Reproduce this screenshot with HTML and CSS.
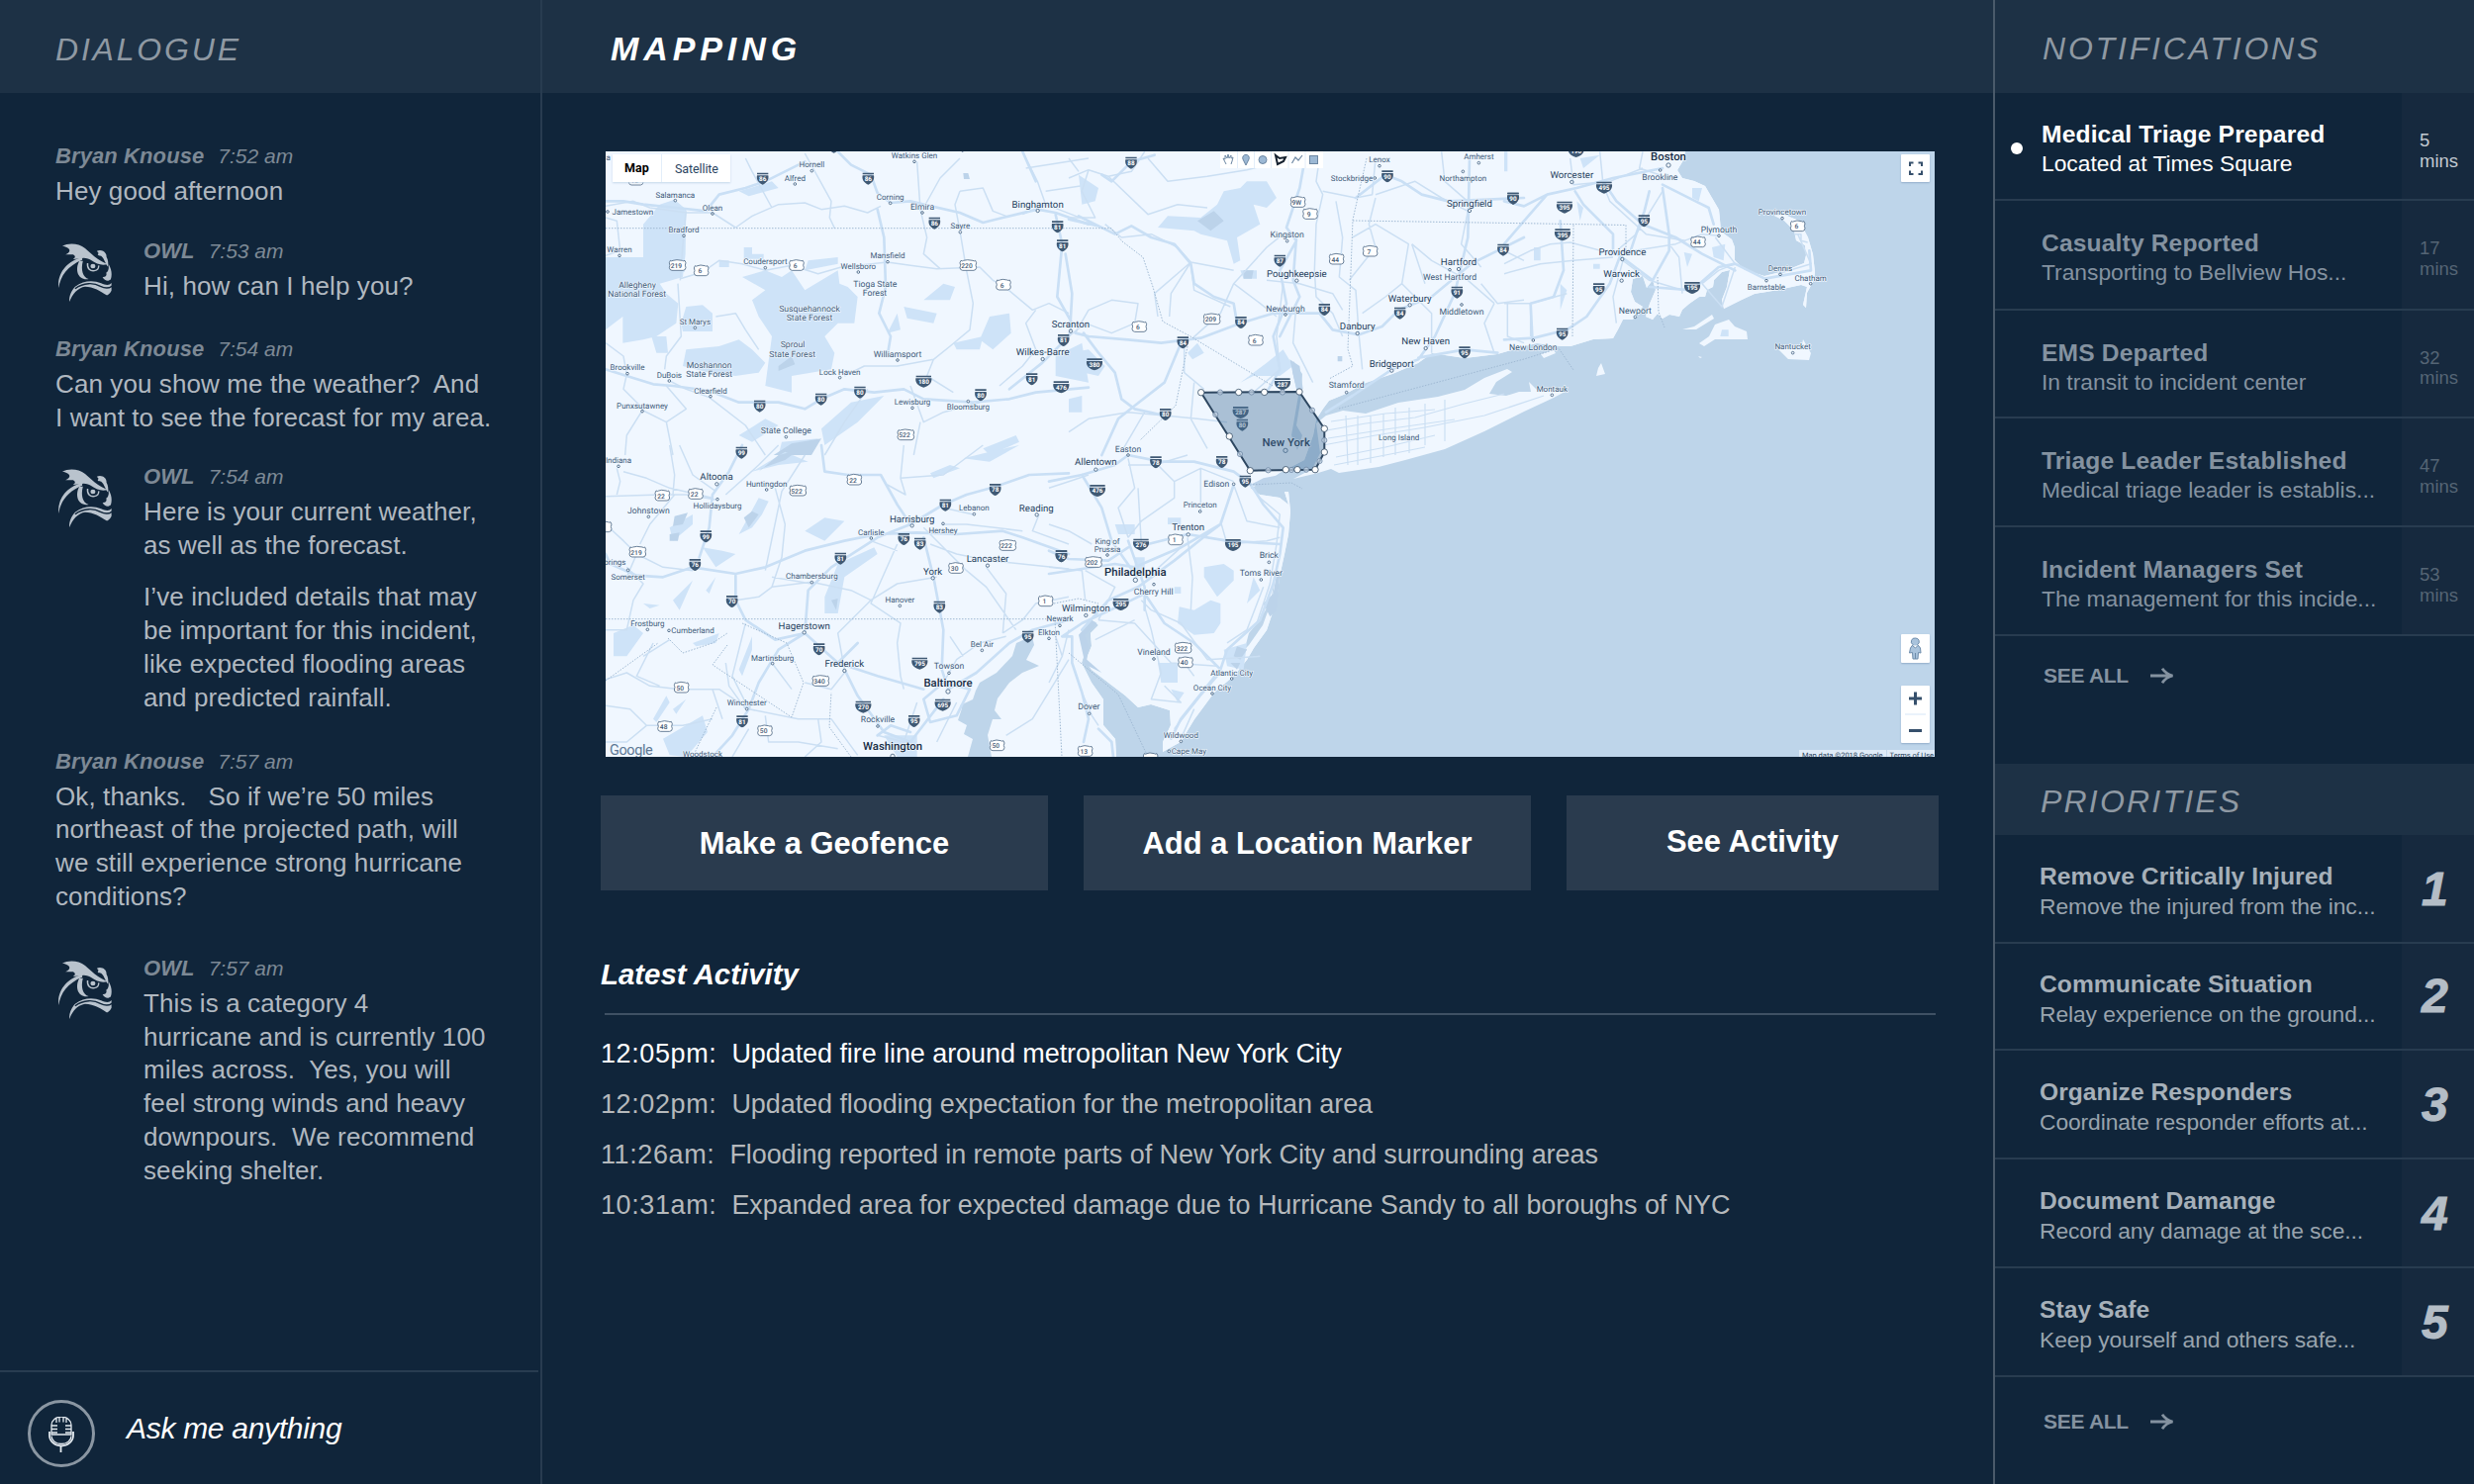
FILE: index.html
```html
<!DOCTYPE html>
<html lang="en">
<head>
<meta charset="utf-8">
<title>OWL – Mapping</title>
<link rel="stylesheet" href="styles.css">
</head>
<body>
<svg class="defs" aria-hidden="true">
  <symbol id="owl" viewBox="165 735 150 177" preserveAspectRatio="none">
    <path d="M176 743C195 733 222 735 240 750L266 775C279 786 290 793 303 798C288 803 272 798 258 787C250 781 238 777 226 781L206 783C214 778 213 773 206 769L185 769C196 763 198 758 195 752C190 746 183 744 176 743Z"/>
    <path d="M232 778C192 786 160 826 166 870C170 834 192 802 232 785Z"/>
    <path d="M273 758C287 752 301 762 300 776C305 784 305 796 305 806C297 800 295 781 285 773C278 773 272 770 278 765Z"/>
    <path d="M224 788C210 815 220 848 250 843C234 838 227 815 234 788Z"/>
    <path d="M306 798C315 815 316 830 312 844C305 852 295 849 289 837C298 838 302 832 299 824C306 820 307 810 306 798Z"/>
    <path d="M247 795C245 812 255 820 266 818C274 816 279 810 278 802" fill="none" stroke="currentColor" stroke-width="4"/>
    <circle cx="262" cy="804" r="7"/>
    <path d="M212 866C235 848 262 846 285 856C298 862 308 863 314 855L314 878C309 888 304 892 300 892C285 880 262 866 240 866C220 869 204 888 196 912C194 895 202 877 212 866Z"/>
    <path d="M212 872C236 853 265 854 283 865C296 872 306 873 316 864" fill="none" stroke="#10253a" stroke-width="4"/>
  </symbol>
  <symbol id="arrow" viewBox="0 0 24 16"><path d="M0 8H22M12 .8C14.500 4.500 18 7 22.500 8C18 9 14.500 11.500 12 15.200" fill="none" stroke="currentColor" stroke-width="2.800"/></symbol>
  <symbol id="interstate" viewBox="-20 -20 40 40" overflow="visible"><path d="M-17-17H17V-12H-17ZM-17-9H17C20 4 12 14 0 19C-12 14-20 4-17-9Z"/></symbol>
  <symbol id="interstate-wide" viewBox="-26 -20 52 40" overflow="visible"><path d="M-23-17H23V-12H-23ZM-24-9H24C26 6 16 14 0 19C-16 14-26 6-24-9Z"/></symbol>
</svg>

<div class="app">
  <aside class="dialogue">
    <header class="bar"><h2 class="bar-title">DIALOGUE</h2></header>
    <div class="chat">
      <article class="msg">
        <div class="meta"><b>Bryan Knouse</b><time>7:52 am</time></div>
        <p>Hey good afternoon</p>
      </article>
      <article class="msg bot">
        <svg class="owl"><use href="#owl"/></svg>
        <div>
          <div class="meta"><b>OWL</b><time>7:53 am</time></div>
          <p>Hi, how can I help you?</p>
        </div>
      </article>
      <article class="msg">
        <div class="meta"><b>Bryan Knouse</b><time>7:54 am</time></div>
        <p>Can you show me the weather?&nbsp; And<br>I want to see the forecast for my area.</p>
      </article>
      <article class="msg bot">
        <svg class="owl"><use href="#owl"/></svg>
        <div>
          <div class="meta"><b>OWL</b><time>7:54 am</time></div>
          <p>Here is your current weather,<br>as well as the forecast.</p>
          <p>I’ve included details that may<br>be important for this incident,<br>like expected flooding areas<br>and predicted rainfall.</p>
        </div>
      </article>
      <article class="msg spaced">
        <div class="meta"><b>Bryan Knouse</b><time>7:57 am</time></div>
        <p>Ok, thanks.&nbsp;&nbsp; So if we’re 50 miles<br>northeast of the projected path, will<br>we still experience strong hurricane<br>conditions?</p>
      </article>
      <article class="msg bot spaced-lg">
        <svg class="owl"><use href="#owl"/></svg>
        <div>
          <div class="meta"><b>OWL</b><time>7:57 am</time></div>
          <p>This is a category 4<br>hurricane and is currently 100<br>miles across.&nbsp; Yes, you will<br>feel strong winds and heavy<br>downpours.&nbsp; We recommend<br>seeking shelter.</p>
        </div>
      </article>
    </div>
    <footer class="ask">
      <span class="mic">
        <svg viewBox="0 0 26 36" fill="none" stroke="#e4eaf0" stroke-width="1.3">
          <path d="M3 18V8.500a10 8.500 0 0 1 20 0V18ZM8 1v5M11 .5v5M15 .5v5M18 1v5M3 9h6M3 12.500h6M3 16h6M23 9h-6M23 12.500h-6M23 16h-6M3 19.500a10 8 0 0 0 20 0"/>
          <path d="M1 15v4a12 10.500 0 0 0 24 0v-4M12.500 30v6" stroke-width="1.800"/>
        </svg>
      </span>
      <span class="ask-label">Ask me anything</span>
    </footer>
  </aside>

  <main class="mapping">
    <header class="bar"><h1 class="bar-title active">MAPPING</h1></header>
    <div class="work">
      <section class="map">
        <svg id="map" viewBox="612 153 1343 612">
          <defs>
            <pattern id="lanes" width="46" height="38" patternUnits="userSpaceOnUse" patternTransform="rotate(-24)">
              <path d="M0 6L12 9L21 4L33 8L46 6M0 24L9 21L18 27L30 23L46 24M8 0L11 12L7 22L8 38M27 0L24 10L29 20L27 38M38 6L41 15L36 26" fill="none" stroke="#e2eefb" stroke-width=".7"/>
              <path d="M14 14l3-1 1 2-3 1zM33 29l2-2 2 1-2 3zM3 30l2 1-1 1z" fill="#d3e5f7"/>
            </pattern>
          </defs>
          <rect class="water" x="612" y="153" width="1343" height="612"/>
          <path id="mainland" class="land" d="M612 153H1703L1701 162L1695 172L1700 180L1712 183L1723 188L1730 200L1737 212L1738 222L1739 234L1750 242L1753 250L1753 263L1763 273L1783 279L1803 274L1823 266L1825 258L1824 248L1815 243L1813 233L1803 223L1793 218L1803 217L1818 223L1827 240L1832 257L1834 275L1833 283L1826 296L1825 311L1822 308L1826 290L1820 288L1797 293L1773 297L1760 303L1742 312L1740 303L1745 290L1748 273L1740 275L1732 283L1731 290L1725 293L1723 300L1717 300L1707 307L1700 313L1697 320L1687 318L1680 322L1675 317L1670 323L1663 320L1667 307L1673 293L1670 283L1664 291L1660 279L1650 282L1648 295L1652 305L1660 310L1653 317L1650 323L1640 323L1635 333L1630 342L1610 343L1587 350L1577 350L1553 347L1540 350L1513 358L1480 362L1447 357L1433 367L1407 378L1380 387L1360 398L1343 405L1337 413L1330 424L1327 440L1318 465L1293 478L1280 487L1263 493L1273 500L1293 503L1302 510L1298 497L1302 497L1304 517L1302 540L1298 560L1293 583L1290 607L1280 637L1267 655L1260 667L1247 683L1227 700L1207 727L1193 750L1175 760L1175 750L1183 733L1182 718L1163 712L1150 715L1137 703L1120 690L1103 677L1097 668L1103 653L1102 640L1110 632L1106 628L1092 643L1097 657L1093 670L1103 690L1115 707L1115 733L1127 747L1128 765H612Z"/>
          <use href="#mainland" class="lanes"/>
          <path class="water" d="M1043 643L1045 652L1037 667L1050 673L1033 680L1020 690L1008 706L1005 718L1012 727L1003 727L998 743L1002 765H978L983 747L974 742L977 733L968 728L972 716L970 713L983 707L986 698L990 690L1007 680L1023 663L1027 650ZM1307 365L1316 378L1315 400L1310 430L1316 440L1311 455L1305 440L1312 400L1306 376ZM1290 570L1286 605L1272 628L1262 640L1258 655L1250 664L1262 652L1276 632L1284 610ZM1246 655L1260 656L1254 668L1248 664Z"/>
          <path class="land" d="M1330 428L1340 420L1357 415L1380 418L1413 407L1453 401L1480 394L1500 382L1523 373L1528 376L1512 386L1505 398L1522 400L1535 396L1547 396L1545 386L1553 394L1583 395L1570 402L1540 416L1500 436L1460 454L1420 465L1393 472L1353 478L1345 474L1332 478L1307 484L1326 474L1334 458Z"/>
          <path class="land" d="M1717 347L1727 340L1733 328L1747 323L1753 330L1765 335L1766 343L1753 343L1733 343L1722 350ZM1797 353L1820 353L1822 343L1830 357L1828 364L1807 363ZM1618 367L1622 378L1613 380L1615 372ZM1700 333L1712 330L1730 318L1732 322L1714 333ZM1557 358L1570 354L1572 357L1560 362ZM1716 360l4 1-2 1z"/>
          <g transform="translate(600 140) scale(.33333)">
            <path class="park" d="M150 260L200 200L245 185L280 215L278 350L270 420L200 440L220 470L256 500L250 560L190 600L150 610L88 620L88 540L36 580V360L150 360ZM235 370h40v35h-40ZM450 420L520 400L570 420L600 400L640 460L740 400L745 440L770 450L800 480L790 560L740 560L700 600L730 650L720 700L600 720L600 770L520 750L540 600L500 540L480 490L520 460ZM455 330h25v20h35v15h-60ZM265 560L280 510L330 505L360 530V585H270ZM280 640L380 630L440 610L480 640L520 680L500 710L430 720L350 710L270 690ZM175 600L220 600L225 650H190ZM1000 490L1060 440L1095 450L1080 490ZM940 510L1040 530L1030 560L950 545ZM1200 540L1260 530L1265 590L1210 640L1170 610ZM1090 620L1180 600L1170 640H1100ZM890 590L920 530L930 580ZM650 370L740 360V380L640 400ZM440 160L540 130L560 150L470 175ZM380 370h30v20h-30ZM690 880L780 800L880 780L800 860L700 930ZM440 900L520 850L560 870L480 920ZM570 920L680 910L640 960H560ZM1180 940L1280 900L1290 920L1200 960ZM1400 660L1480 620L1500 740L1400 720Z"/>
            <path class="wood" d="M545 960L600 925L690 910L660 960ZM560 690l40-30 10 25-50 20zM1120 105l15 0 5 18-18 0z"/>
            <path class="road" d="M36 205L120 190L170 210L280 225L360 225L430 270M36 240L70 250L80 340L36 355M430 270L480 235L560 200L640 195L690 215L760 205L830 225L870 205M460 60L480 100L540 210M640 45L720 190L715 240L730 272M280 220L270 320L262 430M255 440L265 600L220 660L215 700M262 425L330 405L380 370L450 380L520 400L600 385L680 410L750 390L890 375L960 385L1040 395L1170 390L1210 430L1240 445L1330 520L1380 500L1440 530M980 70L990 215L1010 300L1000 350L1050 395M1000 210L1050 120L1110 60M1110 160L1180 150L1210 220L1250 235M1110 160L1095 200L1110 280L1130 400L1150 500L1140 580L1080 630L1030 670L920 690L820 690L760 720M1030 670L1010 720L1090 770M370 540L430 530L460 580L500 640M100 715L90 760L150 820L100 900L95 960M220 750L280 820L220 860L150 825M220 860L240 960M230 735L280 760L350 785L460 870L520 960M700 960L760 860L830 760M960 750L1000 860L1060 830L1170 800M990 860L970 960M1230 750L1300 690L1340 640L1310 560L1340 520M1300 40L1345 130L1370 200L1500 250M1370 160L1500 140M1310 90L1500 60M1370 200L1300 230M36 620L90 660L100 715"/>
            <path class="highway" d="M36 190L90 190L150 200L250 210L340 220L380 170L460 150L520 130L560 110L640 70M740 40L780 80L840 110L860 165L900 195L960 190L1000 200L1110 225L1180 255L1240 240L1345 215L1400 225L1500 260M860 215L880 300L885 450L865 530L900 600L890 660M36 700L100 720L180 745L240 750L350 765L440 800L560 800L640 820L690 790L760 760L850 770L940 760L1000 790L1150 800L1260 790L1340 770L1500 755M1400 230L1420 320L1405 480L1450 560L1440 600L1360 680L1260 760M1430 350L1450 470L1445 560M1300 40L1340 130"/>
          </g>
          <g transform="translate(1080 140) scale(.33333)">
            <path class="park" d="M470 160L520 150L540 130L600 130L630 180L600 210L560 200L580 260L510 300L520 370L500 380L480 310L400 290L380 280L270 270L300 235L400 240L450 200ZM600 680L650 640L680 690L640 720H560L520 740ZM0 650L60 640L110 690L90 720L0 700ZM360 650L390 620L410 650L375 670ZM0 790L40 780V830H0ZM30 110L90 150L80 190L40 200ZM520 400h50v25h-40z"/>
            <path class="wood" d="M390 250L440 220L470 250L430 280ZM530 400L560 400L555 425L530 425ZM670 670L700 690L710 760L690 760ZM815 660h14v16h-14z"/>
            <path class="road" d="M0 120L60 95L120 115L190 100L230 40M60 95L40 160L80 240L0 240M120 115L240 230L330 200L420 210M240 60L300 130L420 115L540 95L600 80M110 260L160 300L250 290L330 330L370 375L450 390L500 400M370 375L260 470L270 540M370 375L310 470L305 540M370 380L380 460L490 510M370 610L460 530L500 440L600 330L650 290M500 440L580 500L630 540M500 500L510 560M600 430L700 440L800 470L830 520M760 60L750 130L770 170L750 260L745 400L750 480L800 530L830 600M770 160L870 180L920 170L930 60M810 190L830 300L820 420L870 460L880 600L890 700M930 180L910 260L930 330L850 430M860 300L930 260L1030 320L1010 440L960 480L890 530M1040 320L1100 370L1210 430L1290 500M1130 40L1140 130L1220 200M930 170L1050 130L1130 180L1210 220M1210 220L1190 320L1250 390M1250 440L1300 500L1380 490M1290 500L1260 560L1290 650M1010 440L1100 530L1100 650M0 600L50 560L130 590L200 560L210 500L130 490L60 520L20 590M350 620L350 710L410 760M0 890L60 850L180 830L290 840L390 850L480 860M230 830L160 950M650 440L630 600L640 700L560 770M690 500L680 620L740 740M380 740L370 850L420 940M0 60L30 100M1040 320L1080 440M1320 340L1380 370"/>
            <path class="highway" d="M0 245L90 265L140 290L190 265L250 300L320 320L370 380L380 440L440 480L500 500L510 560M20 590L60 600L180 610L280 620L400 605L520 560L620 530L760 530L800 580L880 595L950 570L1000 520L1100 480L1220 380L1300 340L1380 300M45 590L90 650L140 710L160 790L200 820L290 840M340 620L290 740L200 810L150 850L100 960M720 40L700 150L660 270L690 310L640 400L660 500L620 600L640 700L600 770M690 300L680 430L700 480L640 600M870 180L960 110L1010 130L1070 170L1150 190L1380 180M1215 60L1210 300L1170 470L1110 600L1060 670L980 700L860 780L780 830M100 110L130 130L190 70L260 50M90 265L30 235M1060 665L1200 640L1300 650"/>
          </g>
          <g transform="translate(1520 140) scale(.33333)">
            <path class="park" d="M230 60L290 50L240 90ZM570 150L600 150L590 190L570 180ZM630 330L670 320L665 370L635 360ZM90 330h20v40h-20ZM0 40h10v60H0zM545 345L570 350L555 390ZM660 580L680 580V600H655ZM220 190L240 210L230 250ZM170 440L190 460L170 520ZM270 380h20v15h-20z"/>
            <path class="road" d="M200 60L210 140L320 130L420 90M290 40L300 140L320 190L430 290L550 310M420 40L410 90L500 120M0 380L80 340L140 320L200 315L330 350L520 320L600 290L650 295M0 410L110 380L210 370L330 360M0 500L80 500L190 470M480 160L400 290L330 350M360 370L330 480L340 560M360 370L440 430L540 460M540 470L530 360L500 320M640 300L700 380L650 400L600 440M700 390L660 510L600 440M890 290L930 380L830 410M80 500L80 600M880 290h20v20l20 5M10 500L10 600L60 620"/>
            <path class="highway" d="M0 190L60 205L130 170L220 150L330 120L480 90M130 170L60 250L0 320M215 160L240 200L330 290L330 350M300 130L340 190L420 260L520 300L600 350L700 400M480 150L500 290L500 340L450 430L330 340M480 140L580 190L620 210L635 260M0 610L90 605L190 580L250 540L320 440L350 360M170 250L180 400L150 480L80 500L85 600M440 160L425 220L400 290L380 350M440 450L570 460L650 390L700 380L790 425L930 400L925 340"/>
          </g>
          <g transform="translate(600 450) scale(.33333)">
            <path class="park" d="M60 570L120 545L150 570L100 640H60ZM210 890L330 820L345 870L280 945L230 940ZM440 270L500 160L530 170L510 210L480 250ZM480 80L580 20L650 50L560 60ZM640 260L700 220L760 230L700 290ZM700 460L740 360L850 310L860 330L760 400L740 510H700ZM230 250L300 210L300 240L240 290ZM330 310L390 320L430 330L370 370ZM440 680L480 580L480 620L450 700ZM180 830L220 760L230 780L190 840ZM1020 85L1080 60L1110 70L1030 100ZM1120 40L1200 20L1290 0L1200 50ZM150 480L200 485L170 495ZM300 600L380 570L370 600L310 610ZM880 880h100v65h-60zM240 470L300 410L260 500ZM340 440L370 400L350 450ZM240 800L280 770L250 815Z"/>
            <path class="wood" d="M245 215L285 205L270 240L240 245ZM500 80L560 30L620 15L580 45L510 70ZM230 270L260 265L255 290L230 290ZM455 220L480 200L500 210L470 250ZM720 470L740 465L735 500Z"/>
            <path class="road" d="M36 155L200 150L280 150L370 165M70 70L80 110L70 150M90 80L160 100L230 130L360 160M230 0L245 90L240 150M245 150L170 240L140 300M36 240L90 290L130 330L210 370L300 380M100 370L150 420L120 470L100 560L36 560M130 330L100 400M260 0L300 90L370 140M400 150L500 60L560 0M550 130L580 240L570 340L540 430M640 30L570 140L520 380M430 470L500 460L540 430L660 415L780 440L840 470L920 420L1040 400M840 470L740 570L760 680M660 420L540 400M920 300L840 480L930 540L920 600L930 700L940 740M840 290L920 320M1000 250L1130 380L1190 430L1280 560M1190 370L1250 450L1240 570M1020 300L1100 330L1200 350L1440 375M1060 240L1130 240L1300 260M1150 210L1060 190M930 100L1060 90L1180 0M940 0L930 100L945 150L890 120M36 710L100 690L170 730L260 740L380 740L470 800L620 830L720 830L800 940M400 660L410 730L460 800M470 800L420 700L460 540M180 600L130 700L200 730M36 790L110 800L160 850L100 900L36 900M160 850L270 850L360 830M360 740L390 830M640 720L720 740L760 690M680 830L690 900L640 945M540 660L600 740M1240 570L1300 530L1340 480L1440 460M1060 720L1100 650L1170 600L1250 580M1250 880L1330 830L1440 650M1080 580L1120 640M470 860L420 945M520 820L530 900L620 900L740 920M1350 210L1330 260L1440 300M230 590L150 640M1100 780L1040 900M980 780L940 900L860 880"/>
            <path class="highway" d="M36 330L50 360L130 395L210 400L300 370L430 390L520 370L640 320L760 290L860 270L980 265L1100 270L1240 260L1300 280L1440 330M450 0L410 80L360 150L350 250L320 340M430 390L430 470L460 530L550 590L640 570L740 660L860 700L1000 740M640 570L650 440L720 370L860 280L960 240L1060 180L1130 150L1220 125L1320 90L1440 85M1000 280L1030 400L1060 560L1055 680L1075 740M690 0L700 80L770 90L870 90L920 180L960 240M640 570L560 620L500 720L470 800L420 880L360 945M760 680L800 760L880 870L960 900M1075 740L1160 690L1260 600L1330 560L1440 530M960 900L1060 770M1000 770L1020 840L1100 820L1140 740L1060 720L1000 770M860 880L900 850L960 870M740 660L800 600"/>
          </g>
          <g transform="translate(1060 450) scale(.33333)">
            <path class="park" d="M470 370L530 360L560 380L560 410L510 460L470 400ZM395 490L440 500L490 470L520 480L520 540L500 570L440 575L390 540ZM330 660h60v60h-50zM370 740L410 750L390 780ZM380 430h20v20h-20ZM620 400L640 440L600 480ZM200 240h60v30h-50zM260 340h30v60h-30zM530 620L600 600L590 680L540 670ZM360 220h40v20h-40z"/>
            <path class="wood" d="M90 575L130 530L145 540L110 575L120 610L115 650L160 690L110 665ZM700 390L690 500L670 520L650 480L680 450L690 390ZM570 610L600 620L580 650L560 640ZM550 660L580 660L570 680ZM650 100L700 90L640 125L610 120Z"/>
            <path class="road" d="M240 40L260 130L210 190L240 280M0 130L60 110L120 90M240 60L320 60L420 30M330 60L380 110L380 160L280 230L240 280M380 110L460 70L560 110M460 70L460 200M270 130L280 300M420 280L435 400L430 500M520 230L540 300L660 290L700 280M560 120L600 230L700 250M600 110L640 160L700 210L690 300L670 420L630 540M540 600L600 560L650 430M0 370L100 380L110 470M280 470L310 500L400 540L480 650L640 640M150 530L260 540L370 660L510 670M290 490L310 560L340 690L310 770L400 780L350 730M410 660L440 700M0 240L60 260L130 300M300 400L400 310M150 530L200 430L110 380M20 580L40 640L0 720M40 640L60 560M100 750L130 820L150 850M140 590L260 530M380 860L460 760L520 690M400 890L440 800"/>
            <path class="highway" d="M0 110L100 90L200 60L240 30L340 50L440 50L560 80L600 110M100 90L160 190L190 290L260 390M0 390L100 375L200 360L260 370L400 310L520 240L560 120M0 320L60 345L180 350L240 310M300 300L420 270L540 290L700 300M100 560L180 470L270 430L380 350L480 270L520 240M40 580L100 540L250 470L290 450L350 540L440 600L520 680M600 100L650 180L710 250L700 330L680 420L640 530L540 620L520 680M40 580L70 580L70 660L100 750L120 830L105 900M520 680L400 830L370 890M240 290L290 430L290 500M150 860L190 900L195 945"/>
          </g>
          <path class="road" d="M1335 436L1380 428L1430 422L1480 408L1520 398M1337 450L1390 440L1440 432L1500 420L1560 400M1350 462L1400 452L1450 440M1360 420L1362 470M1385 420V468M1410 412V460M1440 408V450M1345 426L1400 418L1450 414M1342 443L1400 434L1470 424M1348 470L1400 460L1440 452M1372 420V470M1398 418V462M1424 412V458M1460 404V446"/>
          <path class="border" d="M612 230.700H1123L1134 244L1155 260L1165 290L1175 325L1203 340L1286 390M1381 160L1367 222L1362 353L1367 370L1343 383M1367 223L1540 225.700L1643 227.500V253M1590 227.500L1589 340M1353 413L1540 363L1575 352L1590 374M1675 280L1676 315L1682 331M612 625.700H1066L1073 765M735 652L720 672L800 725L812 690L795 650L750 630M675 645L690 660L720 650L735 640M1080 660L1130 702L1160 765M1200 350L1188 410L1152 445M1263 490L1305 488L1316 494M860 765L838 735L840 700M612 688L665 650M700 765L724 715M1065 610L1090 605L1110 610"/>
          <g id="markers"></g>
          <g class="fence">
            <path d="M1213.700 396.700L1313 396L1338.300 433.300V457L1329 474.700L1263.300 475.700Z"/>
            <g id="handles"></g>
          </g>
        </svg>
        <div class="map-type"><b>Map</b><span>Satellite</span></div>
        <div class="map-tools">
          <svg viewBox="0 0 104 17">
            <rect width="104" height="17" fill="#fff"/>
            <path d="M17.500 0V17M34.500 0V17M51.500 0V17M69 0V17M86 0V17" stroke="#e3eefa"/>
            <path d="M6 13L4 9L3 7L5 8L5 4L7 7L8 3L9 7L11 4L11 7L13 6L12 10L11 13" fill="none" stroke="#6d87a3"/>
            <path d="M26 14L23 8A3.300 3.300 0 1 1 29 8Z" fill="#9cb8d4" stroke="#6d87a3"/>
            <circle cx="43" cy="8.500" r="4" fill="#9cb8d4" stroke="#6d87a3"/>
            <path d="M56 4L60 7L66 6L64 10L58 13Z" fill="none" stroke="#14202e" stroke-width="2"/>
            <path d="M72.500 12L76 6L79 9L83 4" fill="none" stroke="#6d87a3" stroke-width="1.200"/>
            <rect x="90.500" y="4.500" width="8" height="8" fill="#9cb8d4" stroke="#6d87a3"/>
          </svg>
        </div>
        <div class="ctl fullscreen"><svg viewBox="0 0 29 28"><path d="M9 12V8.500H12.500M17.500 8.500H21V12M21 16.500V20H17.500M12.500 20H9V16.500" fill="none" stroke="#36506c" stroke-width="2"/></svg></div>
        <div class="ctl pegman"><svg viewBox="0 0 29 29"><path d="M14.500 4a3.600 3.600 0 0 1 2.200 6.600L19.500 14L20 19L17.500 18.500L17 25H12L11.500 18.500L8.500 19L9.500 14L12 10.600A3.600 3.600 0 0 1 14.500 4ZM14.500 19V25M11.500 11.500L14.500 14L17 11.500" fill="#a9c3dc" stroke="#6d8cab"/></svg></div>
        <div class="ctl zoom"><svg viewBox="0 0 29 58"><path d="M8 13H21M14.500 6.500V19.500M8 45.500H21" stroke="#36506c" stroke-width="3"/><path d="M4 29H25" stroke="#e3eefa" stroke-width="1.500"/></svg></div>
        <div class="google">Google</div>
        <div class="credit"><span>Map data ©2018 Google</span><span>Terms of Use</span></div>
      </section>
      <div class="actions">
        <button>Make a Geofence</button>
        <button>Add a Location Marker</button>
        <button class="raised">See Activity</button>
      </div>
      <section class="activity">
        <h3>Latest Activity</h3>
        <ul>
          <li class="new"><time>12:05pm:</time>Updated fire line around metropolitan New York City</li>
          <li><time>12:02pm:</time>Updated flooding expectation for the metropolitan area</li>
          <li><time>11:26am:</time>Flooding reported in remote parts of New York City and surrounding areas</li>
          <li><time>10:31am:</time>Expanded area for expected damage due to Hurricane Sandy to all boroughs of NYC</li>
        </ul>
      </section>
    </div>
  </main>

  <aside class="side">
    <header class="bar"><h2 class="bar-title">NOTIFICATIONS</h2></header>
    <ul class="rows notes">
      <li class="unread"><i class="dot"></i><div class="txt"><b>Medical Triage Prepared</b><span>Located at Times Square</span></div><div class="when">5<br>mins</div></li>
      <li><div class="txt"><b>Casualty Reported</b><span>Transporting to Bellview Hos...</span></div><div class="when">17<br>mins</div></li>
      <li><div class="txt"><b>EMS Departed</b><span>In transit to incident center</span></div><div class="when">32<br>mins</div></li>
      <li><div class="txt"><b>Triage Leader Established</b><span>Medical triage leader is establis...</span></div><div class="when">47<br>mins</div></li>
      <li><div class="txt"><b>Incident Managers Set</b><span>The management for this incide...</span></div><div class="when">53<br>mins</div></li>
    </ul>
    <a class="see-all">SEE ALL <svg><use href="#arrow"/></svg></a>
    <header class="bar sub"><h2 class="bar-title">PRIORITIES</h2></header>
    <ul class="rows prio">
      <li><div class="txt"><b>Remove Critically Injured</b><span>Remove the injured from the inc...</span></div><div class="rank">1</div></li>
      <li class="short"><div class="txt"><b>Communicate Situation</b><span>Relay experience on the ground...</span></div><div class="rank">2</div></li>
      <li><div class="txt"><b>Organize Responders</b><span>Coordinate responder efforts at...</span></div><div class="rank">3</div></li>
      <li><div class="txt"><b>Document Damange</b><span>Record any damage at the sce...</span></div><div class="rank">4</div></li>
      <li><div class="txt"><b>Stay Safe</b><span>Keep yourself and others safe...</span></div><div class="rank">5</div></li>
    </ul>
    <a class="see-all low">SEE ALL <svg><use href="#arrow"/></svg></a>
  </aside>
</div>
<script src="map.js"></script>
</body>
</html>
```
FILE: styles.css
```css
* { box-sizing: border-box; margin: 0; padding: 0; }
body { background: #10253a; font-family: "Liberation Sans", Arial, sans-serif; color: #fff; }
ul { list-style: none; }
svg { display: block; }
.defs { position: absolute; width: 0; height: 0; }

.app { display: grid; grid-template-columns: 548px 1466px 486px; width: 2500px; height: 1500px; overflow: hidden; }
.bar { height: 94px; background: #1d3145; display: flex; align-items: center; }
.bar-title { font-size: 32px; line-height: 36px; font-weight: 400; font-style: italic; letter-spacing: 2.8px; color: #8f99a3; }

/* dialogue */
.dialogue { display: flex; flex-direction: column; border-right: 2px solid #283c50; }
.dialogue .bar { padding: 6px 0 0 56px; }
.chat { flex: 1; padding: 49px 0 0 56px; }
.msg { margin-bottom: 28px; }
.msg.bot { margin-bottom: 31.500px; }
.msg.spaced { margin-top: 32.500px; }
.msg.spaced-lg { margin-top: 40.500px; }
.msg p { font-size: 26px; line-height: 33.7px; letter-spacing: .1px; color: #b0b8c0; white-space: nowrap; }
.msg p + p { margin-top: 18.700px; }
.meta { display: flex; gap: 14px; height: 34px; font-size: 22px; line-height: 30px; font-style: italic; color: #7d8995; }
.meta b { letter-spacing: .1px; }
.meta time { font-size: 21px; }
.bot { display: flex; gap: 32.500px; }
.owl { width: 54px; height: 59px; margin: 7px 0 0 2.500px; flex: none; fill: #b9c3cd; color: #b9c3cd; }
.ask { width: 544px; height: 115px; border-top: 2px solid #283c50; display: flex; align-items: center; padding: 10px 0 0 28px; }
.mic { width: 68px; height: 68px; border: 3px solid #8a96a2; border-radius: 50%; display: flex; align-items: center; justify-content: center; padding-top: 3px; }
.mic svg { width: 26px; height: 36px; }
.ask-label { margin: -9px 0 0 32px; font-size: 30px; font-style: italic; letter-spacing: -.3px; }

/* mapping */
.mapping .bar { padding: 3px 0 0 69px; }
.bar-title.active { font-weight: 700; color: #fff; font-size: 34px; letter-spacing: 4.900px; }
.work { padding: 59px 54px 0 59px; }
.map { position: relative; width: 1343px; height: 612px; margin-left: 5px; overflow: hidden; font-family: Roboto, sans-serif; }
.map > svg { width: 1343px; height: 612px; text-rendering: geometricPrecision; }
.water { fill: #bed5ea; }
.land { fill: #f0f7ff; }
.lanes { fill: url(#lanes); }
#mainland { fill: inherit; }
.land#mainland { fill: #f0f7ff; }
.park { fill: #cee3f8; }
.wood { fill: #bcd3ea; }
.road { fill: none; stroke: #cbdff3; stroke-width: 4.500; stroke-linejoin: round; }
.map > svg > .road { stroke-width: 1.200; }
.highway { fill: none; stroke: #c9dff5; stroke-width: 8; stroke-linejoin: round; stroke-linecap: round; }
.border { fill: none; stroke: #9fb9d3; stroke-width: 1; stroke-dasharray: 1.500 1.500; }
.label { font-family: Roboto, sans-serif; text-anchor: middle; fill: #3f5c7a; stroke: #f0f7ff; stroke-width: 4; stroke-linejoin: round; paint-order: stroke; }
.label.c { fill: #24405c; }
.label.b { fill: #162c44; font-weight: 500; }
.town { fill: #f0f7ff; stroke: #456280; stroke-width: 2.500; }
.shield { fill: #3f5974; }
.shield-num { font: 700 19px Roboto, sans-serif; fill: #fff; text-anchor: middle; }
.route { fill: #fff; stroke: #4d6884; stroke-width: 2.500; }
.route-num { font: 500 20px Roboto, sans-serif; fill: #3f5974; text-anchor: middle; }
.fence path { fill: rgba(74, 116, 156, .42); stroke: #2e4761; stroke-width: 2; }
.handle { fill: #fff; stroke: #2e4761; stroke-width: .8; }
.handle.mid { fill: #c9d9e9; fill-opacity: .7; stroke: #6d87a3; }

.map-type { position: absolute; left: 7px; top: 3px; height: 28px; display: flex; align-items: center; background: #fff; color: #2b4460; font-size: 12.500px; box-shadow: 0 1px 2px #c3d6ea; }
.map-type b { width: 50px; padding-left: 12px; font-weight: 700; color: #000; line-height: 28px; border-right: 1px solid #e3eefa; }
.map-type span { padding: 0 12px 0 13px; letter-spacing: -.1px; }
.map-tools { position: absolute; left: 621px; top: 0; width: 104px; height: 17px; }
.ctl { position: absolute; left: 1309px; width: 29px; background: #fff; border-radius: 1px; box-shadow: 0 1px 2px #92adc9; }
.fullscreen { top: 3px; }
.pegman { top: 488px; }
.zoom { top: 540px; }
.google { position: absolute; left: 4px; bottom: -3px; font-size: 14.500px; line-height: 18px; letter-spacing: -.4px; color: #5d7894; }
.credit { position: absolute; right: 0; top: 605px; display: flex; height: 12px; background: #dfebf7; color: #2b4460; font-size: 7.500px; line-height: 12px; white-space: nowrap; text-rendering: geometricPrecision; }
.credit span { padding: 0 3px; }
.credit span + span { border-left: 1px solid #c3d6ea; padding-right: 1px; }

.actions { display: grid; grid-template-columns: 452px 452px 376px; gap: 36px; margin-top: 39px; }
.actions button { height: 96px; border: 0; background: #2a3b4e; color: #fff; font: 700 30.900px "Liberation Sans", Arial, sans-serif; padding-top: 1px; }
.actions .raised { padding: 0 0 3px; }
.activity { margin-top: 65px; }
.activity h3 { font-size: 29.400px; line-height: 40px; font-style: italic; height: 59px; }
.activity ul { width: 1345px; margin-left: 4px; border-top: 2px solid #3f5164; padding-top: 14px; }
.activity li { margin-left: -4px; font-size: 27px; line-height: 51px; letter-spacing: -.07px; color: #b5b9bc; white-space: nowrap; }
.activity li.new { color: #fff; }
.activity time { letter-spacing: .600px; margin-right: 15px; }

/* notifications and priorities */
.side { border-left: 2px solid #4a5a6a; }
.side .bar { padding: 3px 0 0 48px; }
.side .bar.sub { height: 72px; padding: 4px 0 0 46px; }
.side .bar.sub .bar-title { letter-spacing: 2.200px; }
.rows li { position: relative; display: flex; height: 110px; border-bottom: 2px solid #283c50; }
.notes li:first-child { height: 109px; }
.notes li:nth-child(3) { height: 109.500px; }
.notes li:nth-child(2) { height: 110.500px; }
.txt { width: 411px; padding: 28px 0 0 47px; color: #8492a0; white-space: nowrap; }
.unread .txt { padding-top: 27px; }
.txt b { display: block; font-size: 24.600px; line-height: 30px; letter-spacing: .15px; }
.txt span { display: block; font-size: 22.800px; line-height: 29px; }
.when { flex: 1; background: #16293e; padding: 38px 0 0 18px; font-size: 18.500px; line-height: 20.600px; color: #556575; }
.unread .txt { color: #fff; }
.unread .when { color: #c3cad1; }
.dot { position: absolute; left: 16px; top: 50px; width: 12px; height: 12px; border-radius: 50%; background: #fff; }
.prio .txt { padding: 27px 0 0 45px; }
.prio .txt b { color: #a6b0b9; letter-spacing: .05px; }
.prio .txt span { color: #98a3ad; line-height: 30px; letter-spacing: -.08px; }
.prio .short { height: 108px; }
.prio .short .txt { padding-top: 26px; }
.rank { flex: 1; background: #16293e; padding: 31px 0 0 20px; font: italic 700 48px/48px "Liberation Sans", Arial, sans-serif; color: #b4bdc6; -webkit-text-stroke: 1px #b4bdc6; }
.short .rank { padding-top: 29px; }
.see-all { display: flex; align-items: center; gap: 22px; height: 129px; padding: 0 0 49px 49px; font-size: 21px; font-weight: 700; letter-spacing: -.3px; color: #8492a0; }
.see-all svg { width: 24px; height: 16px; }
.see-all.low { height: 108px; padding-bottom: 18px; }
```
FILE: map.js
```js
// Map markers, grouped by tile: origin in map units, content at three units per map unit.
const SIZE = { s: 24, m: 26, c: 29, b: 34 };
const tiles = [
  { at: [600, 140], labels: [
    ["Hornell",661,80,"s",661,98],["Alfred",610,120,"s",610,138],["Watkins Glen",972,52,"s",972,70],["Salamanca",247,171,"s",247,188],
    ["Jamestown",118,222,"s",42,222],["Olean",360,210,"s",360,228],["Corning",899,179,"s",899,196],["Elmira",996,206,"m",996,225],
    ["Binghamton",1346,199,"c",1346,219],["Bradford",273,278,"s",273,295],["Sayre",1111,266,"s",1111,284],["Warren",78,337,"s",78,355],
    ["Coudersport",520,374,"s",520,392],["Mansfield",891,356,"s",891,374],["Wellsboro",802,387,"s",802,405],
    ["Allegheny",132,445,"m"],["National Forest",131,472,"m"],["Tioga State",853,441,"m"],["Forest",852,469,"m"],
    ["Susquehannock",654,516,"m"],["State Forest",654,544,"m"],["St Marys",307,556,"s",307,574],["Sproul",603,625,"m"],["State Forest",602,653,"m"],
    ["Scranton",1446,564,"c",1446,584],["Williamsport",921,653,"m",921,672],["Wilkes-Barre",1361,648,"c",1361,669],
    ["Brookville",102,695,"s",102,713],["DuBois",229,717,"s",229,735],["Moshannon",350,687,"m"],["State Forest",350,715,"m"],
    ["Lock Haven",746,708,"s",746,725],["Clearfield",354,765,"s",354,782],["Punxsutawney",147,810,"s",147,827],["Lewisburg",966,799,"s",966,817],
    ["Bloomsburg",1135,815,"s",1135,797],["State College",583,886,"m",583,905],["a",44,58,"s"]],
    shields: [["86",512,121],["86",832,121],["86",1033,256],["81",1406,267],["81",1421,324],["180",1000,736],["81",1424,611],["80",807,769],["80",689,790],["80",503,811],["80",1173,777],["81",1328,729],["476",1417,753],["",728,25],["",1118,22]],
    routes: [["219",250,385],["6",322,401],["6",611,385],["220",1131,385],["6",1238,444],["522",942,899],["16",124,126]] },
  { at: [1080, 140], labels: [
    ["Lenox",942,65,"s",942,83],["Amherst",1243,56,"s",1243,74],["Stockbridge",858,120,"s",928,120],["Northampton",1195,120,"s",1195,100],
    ["Springfield",1215,196,"c",1215,219],["Kingston",662,292,"m",662,311],["Hartford",1182,373,"c",1182,396],["West Hartford",1155,420,"m",1155,398],
    ["Poughkeepsie",691,410,"c",691,431],["Waterbury",1034,484,"c",1034,505],["Newburgh",657,515,"m",657,534],["Middletown",1191,525,"m",1191,504],
    ["Danbury",875,570,"c",875,591],["New Haven",1082,614,"c",1082,636],["Bridgeport",979,683,"c",979,704],["Stamford",842,748,"m",842,770],
    ["New York",659,921,"b",657,946],["Long Island",1001,907,"s"],["Easton",180,941,"m",180,960]],
    shields: [["88",189,73],["90",966,114],["90",1347,181],["87",640,370],["84",1317,337],["91",1177,466],["84",1004,529],["84",775,518],["84",522,557],["84",346,618],["380",78,684],["95",1200,648],["287",648,744],["287",521,830],["80",526,868],["80",293,836]],
    routes: [["9W",691,193],["9",728,229],["44",808,366],["7",910,342],["209",430,548],["6",210,571],["6",563,612]] },
  { at: [1520, 140], labels: [
    ["Boston",498,54,"b",498,81],["Worcester",205,110,"c",205,132],["Brookline",472,118,"m",473,96],["Provincetown",843,224,"s",843,242],
    ["Plymouth",651,276,"m",651,295],["Providence",358,343,"c",358,366],["Warwick",356,410,"c",356,431],["Dennis",837,395,"s",837,412],
    ["Chatham",929,423,"s",929,440],["Barnstable",795,451,"s",795,431],["Newport",397,522,"m",397,541],["New London",88,632,"m",88,612],
    ["Nantucket",875,632,"s",875,650],["Montauk",145,761,"s",145,778]],
    shields: [["495",303,148],["90",27,181],["395",183,208],["95",424,249],["395",177,291],["95",287,456],["195",570,452],["95",176,592],["190",218,38]],
    routes: [["6",886,266],["44",584,314]] },
  { at: [600, 450], labels: [
    ["Indiana",75,47,"s",75,64],["Altoona",372,96,"c",373,118],["Huntingdon",524,117,"s",524,135],["Johnstown",166,198,"m",166,217],["Hollidaysburg",375,184,"s",375,164],
    ["Lebanon",1153,190,"s",1153,209],["Reading",1342,190,"c",1343,211],["Harrisburg",965,223,"c",965,244],["Hershey",1059,258,"s",1059,238],
    ["Carlisle",841,264,"s",841,282],["Lancaster",1194,344,"c",1194,365],["York",1028,382,"c",1028,403],["prings",64,356,"s"],["Somerset",104,399,"s",104,379],
    ["Chambersburg",661,398,"s",661,416],["Hanover",928,469,"s",928,487],["Frostburg",163,541,"s",163,559],["Cumberland",300,562,"s",228,562],
    ["Hagerstown",638,547,"c",638,568],["Bel Air",1177,603,"s",1177,622],["Elkton",1380,568,"s",1380,586],["Martinsburg",542,645,"s",542,662],
    ["Frederick",760,663,"c",760,684],["Towson",1077,669,"m",1077,691],["Baltimore",1074,720,"b",1074,747],["Winchester",464,782,"s",464,800],
    ["Rockville",861,830,"m",861,852],["Washington",906,913,"b",906,943],["Woodstock",330,936,"s"]],
    shields: [["99",448,22],["78",1217,134],["81",1066,181],["99",340,276],["76",940,284],["83",989,298],["76",307,362],["81",748,343],["76",1417,336],["70",419,473],["83",1048,490],["95",1316,580],["70",683,618],["795",988,661],["270",817,793],["695",1058,787],["81",450,837],["95",971,836]],
    routes: [["22",786,105],["22",204,153],["22",305,148],["522",615,138],["219",129,324],["222",1251,304],["30",1094,373],["1",1366,473],["340",684,715],["50",262,735],["48",212,853],["50",515,866],["50",1219,911],["",28,248]] },
  { at: [1060, 450], labels: [
    ["Allentown",142,51,"c",142,74],["Edison",508,118,"m",560,118],["Princeton",458,182,"s",458,201],["Trenton",422,248,"c",422,271],
    ["King of",177,291,"s"],["Prussia",177,315,"s",177,333],["Philadelphia",262,383,"b",262,409],["Cherry Hill",317,444,"m",318,422],
    ["Brick",667,333,"m",667,355],["Toms River",643,387,"m",643,408],["Wilmington",112,493,"c",112,516],["Newark",33,527,"s",33,547],
    ["Vineland",318,626,"m",318,648],["Atlantic City",554,690,"s",554,708],["Ocean City",495,735,"s",495,753],["Dover",121,793,"m",122,814],
    ["Wildwood",400,880,"s",400,898],["Cape May",424,928,"s",364,928]],
    shields: [["78",324,51],["78",524,50],["95",595,109],["476",147,137],["276",279,301],["195",558,302],["76",38,336],["295",218,482]],
    routes: [["1",380,287],["202",131,355],["322",403,615],["40",410,659],["13",106,928],["",304,950]] }
];

const NS = "http://www.w3.org/2000/svg";
function el(parent, name, attrs, text) {
  const node = document.createElementNS(NS, name);
  for (const key in attrs) node.setAttribute(key, attrs[key]);
  if (text) node.textContent = text;
  parent.appendChild(node);
  return node;
}

const markers = document.getElementById("markers");
for (const tile of tiles) {
  const g = el(markers, "g", { transform: `translate(${tile.at[0]} ${tile.at[1]}) scale(.33333)` });
  for (const [num, x, y] of tile.routes) {
    const w = num.length > 2 ? 44 : 38;
    el(g, "path", { class: "route", d: `M${x - w / 2 + 4} ${y - 15}q4 3 8 0q${w / 2 - 12} -4 ${w - 16} 0q4 3 8 0l3 7q-4 8 0 14q0 8 -8 9h-${w - 10}q-8-1-8-9q4-6 0-14Z` });
    if (num) el(g, "text", { class: "route-num", x, y: y + 8 }, num);
  }
  for (const [num, x, y] of tile.shields) {
    const wide = num.length > 2;
    const w = wide ? 52 : 40;
    el(g, "use", { class: "shield", href: wide ? "#interstate-wide" : "#interstate", x: x - w / 2, y: y - 20, width: w, height: 40 });
    if (num) el(g, "text", { class: "shield-num", x, y: y + 8 }, num);
  }
  for (const [name, x, y, size, dx, dy] of tile.labels) {
    if (dx) el(g, "circle", { class: "town", cx: dx, cy: dy, r: size === "b" ? 6.5 : size === "c" ? 5 : 4 });
    el(g, "text", { class: "label " + size, x, y: y + SIZE[size] * 0.34, "font-size": SIZE[size] }, name);
  }
}

const handles = document.getElementById("handles");
const mids = [[1233, 396.5], [1264.7, 396.5], [1296, 396.5], [1326, 414.7], [1338.3, 445], [1333.5, 466], [1320, 474.7], [1305, 474.9], [1281.5, 475.3], [1253, 459], [1228.3, 419]];
const corners = [[1213.7, 396.7], [1251.7, 396.5], [1277.7, 396.4], [1313, 396], [1338.3, 433.3], [1338.3, 457], [1329, 474.7], [1311, 474.7], [1299.3, 474.7], [1263.3, 475.7], [1242.3, 441]];
for (const [cx, cy] of mids) el(handles, "circle", { class: "handle mid", cx, cy, r: 2.6 });
for (const [cx, cy] of corners) el(handles, "circle", { class: "handle", cx, cy, r: 3.2 });
```
